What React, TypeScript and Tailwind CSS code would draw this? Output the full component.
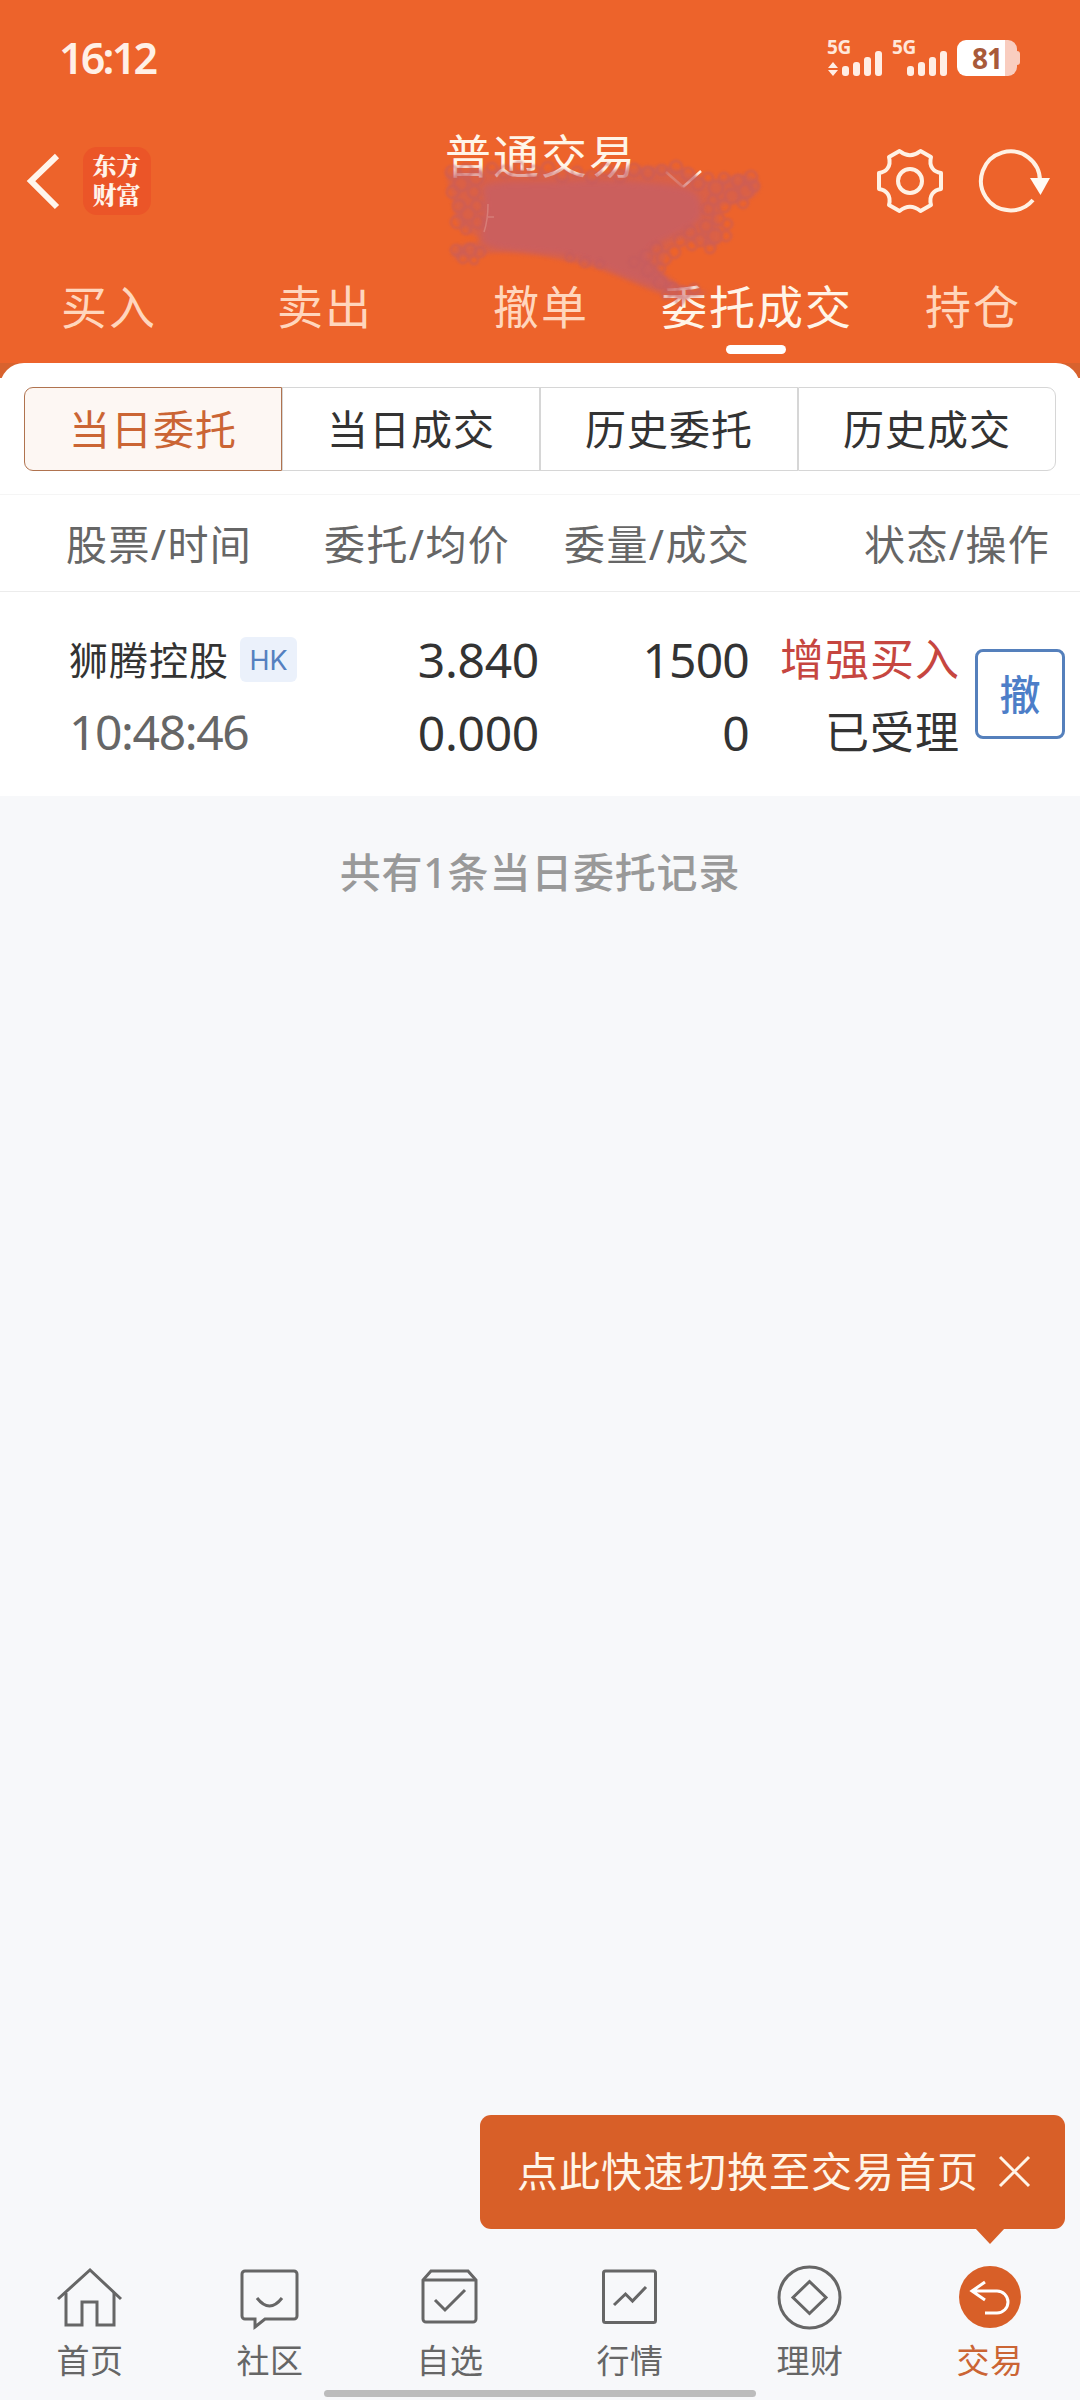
import React, { useState } from "react";
import clsx from "clsx";

const tradeTabs = ["买入", "卖出", "撤单", "委托成交", "持仓"];
const orderTabs = ["当日委托", "当日成交", "历史委托", "历史成交"];

const navItems = [
  {
    label: "首页",
    icon: (
      <>
        <path d="M3 37 35 8l31 29" />
        <path d="M11 31v32h16V40h15v23h17V31" />
      </>
    ),
  },
  {
    label: "社区",
    icon: (
      <>
        <path d="M10 9h49a3 3 0 0 1 3 3v42a3 3 0 0 1-3 3H30l-10 8V57H10a3 3 0 0 1-3-3V12a3 3 0 0 1 3-3Z" />
        <path d="M22 36q12.500 16 25 0" />
      </>
    ),
  },
  {
    label: "自选",
    icon: (
      <>
        <path d="M8 18v39a3 3 0 0 0 3 3h47a3 3 0 0 0 3-3V18l-8-9H16Z" />
        <path d="M8 18h53M20 38l10 10 20-20" />
      </>
    ),
  },
  {
    label: "行情",
    icon: (
      <>
        <rect x="8.500" y="9" width="52" height="51.500" rx="2" />
        <path d="m19 43 11.500-11 7 7L51 25" />
      </>
    ),
  },
  {
    label: "理财",
    icon: (
      <>
        <circle cx="34.500" cy="35.500" r="30.500" />
        <path d="M34.500 19.500 51 35.500l-16.500 16L18 35.500Z" />
      </>
    ),
  },
  {
    label: "交易",
    active: true,
    icon: (
      <>
        <circle cx="35" cy="35" r="31" fill="#d85f28" stroke="none" />
        <path stroke="#fff" d="M30 20 17 29l13 9M17 29h25a11 11 0 0 1 0 22H30" />
      </>
    ),
  },
];

// loose loops around the rim of the marker stroke: [x, y, radius]
const loops = [
  [452, 172, 6], [461, 184, 7], [453, 192, 6], [466, 170, 6], [476, 178, 7], [474, 192, 6],
  [459, 206, 6], [468, 214, 7], [457, 222, 6], [466, 229, 5], [477, 206, 6], [478, 222, 6],
  [456, 250, 5], [463, 258, 5], [470, 250, 6], [480, 252, 5], [474, 260, 4],
  [492, 168, 5], [505, 172, 6], [519, 167, 5], [534, 172, 6], [548, 168, 6], [562, 176, 6],
  [577, 172, 5], [592, 177, 6], [606, 170, 6], [620, 176, 6], [634, 170, 6], [648, 173, 6],
  [662, 170, 5], [676, 167, 6], [688, 174, 6], [698, 184, 6], [708, 178, 5], [716, 188, 7],
  [713, 200, 5], [724, 178, 5], [732, 196, 7], [738, 181, 6], [751, 177, 6], [746, 191, 7],
  [754, 186, 5], [743, 203, 5], [724, 206, 6], [708, 209, 6], [718, 219, 6], [727, 224, 5],
  [706, 226, 6], [715, 236, 7], [726, 236, 5], [710, 248, 5], [700, 240, 6], [690, 232, 6],
  [692, 245, 5], [680, 240, 6], [674, 252, 6], [664, 258, 7], [656, 248, 6], [660, 268, 5],
  [646, 256, 6], [634, 262, 5], [648, 270, 6], [660, 282, 6], [672, 289, 6], [683, 293, 6],
  [694, 289, 5], [680, 300, 4], [666, 295, 4], [600, 264, 4], [585, 262, 5], [570, 257, 4],
];

const MarkerStroke = () => (
  <svg
    className="pointer-events-none absolute left-[430px] top-[150px]"
    width="350"
    height="165"
    viewBox="430 150 350 165"
    fill="none"
  >
    <path
      d="M447 171C470 164 500 172 530 172S590 176 615 171 665 164 688 172 700 184 716 180 752 170 758 182 748 202 729 204 726 228 720 241 698 238 681 241 668 262 660 268 680 287 700 290 692 301 672 297 640 284 615 274 575 264 545 256 498 253 480 255 454 264 453 253 478 244 480 240 455 232 455 215 447 190 447 171Z"
      fill="#c85f62"
      opacity="0.5"
      style={{ filter: "blur(2px)" }}
    />
    <path
      d="M482 186C500 178 530 183 560 181S630 180 665 184 700 195 702 210 682 232 660 243 650 263 672 282 650 288 605 269 560 256 530 253 496 250 485 245 488 220 482 186Z"
      fill="#cb5f5f"
      opacity="0.95"
      style={{ filter: "blur(3px)" }}
    />
    <g stroke="#c45c60" strokeWidth="3" opacity="0.5" style={{ filter: "blur(1px)" }}>
      {loops.map(([x, y, r], index) => (
        <circle key={index} cx={x} cy={y} r={r} />
      ))}
    </g>
    <path d="M488 204q0 16-4 28M488 217h6" stroke="#e39b94" strokeWidth="1.500" opacity="0.5" />
  </svg>
);

const Signal: React.FC<{ data?: boolean }> = ({ data }) => (
  <div className="relative h-9 w-[55px]">
    <span className="absolute -left-px top-[-2px] font-['Open_Sans',sans-serif] text-[19px] font-bold leading-[18px] tracking-[-0.3px] text-[#ffe7da]">
      5G
    </span>
    <svg className="absolute left-0 top-0" width="55" height="36" fill="#ffeee5">
      {data && <path d="m5 22 5 6H0ZM0 30h10l-5 6Z" />}
      <rect x="14" y="26" width="7" height="10" rx="3" />
      <rect x="25" y="22" width="7" height="14" rx="3" />
      <rect x="36" y="17" width="7" height="19" rx="3" />
      <rect x="47" y="11" width="7" height="25" rx="3" />
    </svg>
  </div>
);

const App: React.FC = () => {
  const [activeTrade, setActiveTrade] = useState("委托成交");
  const [activeOrder, setActiveOrder] = useState("当日委托");

  return (
    <div className="flex h-[2400px] w-[1080px] flex-col overflow-hidden bg-[#f7f8fa] font-['Noto_Sans','Noto_Sans_CJK_SC',sans-serif] text-[#333]">
      <header className="relative h-[363px] shrink-0 bg-[#ed632b]">
        {/* status bar */}
        <div className="flex h-[116px] items-center justify-between pl-[59px] pr-[60px]">
          <span className="pb-px text-[43px] font-semibold leading-none tracking-[-2.8px] text-[#fff0e6]">16:12</span>
          <div className="flex items-center">
            <Signal data />
            <div className="w-[10px]" />
            <Signal />
            <div className="ml-[9px] flex h-9 w-[60px] items-center justify-center rounded-[9px] bg-[linear-gradient(to_right,#fff_80%,#f9cdbf_80%)] font-['Open_Sans',sans-serif] text-[28px] font-bold leading-none tracking-[-1px] text-[#a85a3a]">
              81
            </div>
            <div className="h-[14px] w-[3px] rounded-r-sm bg-[#f9cdbf]" />
          </div>
        </div>

        {/* title bar */}
        <div className="flex h-[130px] items-center">
          <svg className="ml-[26px]" width="36" height="60" fill="none" stroke="#fff5ec" strokeWidth="6">
            <path d="M31 5 5 30l26 26" />
          </svg>
          <div className="ml-[21px] flex size-[68px] items-center justify-center rounded-[14px] bg-[#eb5528] pb-[4px] pr-px font-['Noto_Serif_CJK_SC','Noto_Sans_CJK_SC',sans-serif] text-[24px] font-black leading-[29px] text-[#fff3ea]">
            <span className="w-[48px] break-all">东方财富</span>
          </div>
          <div className="ml-[294px] flex h-full w-[280px] items-start pt-[16px] text-[46px] leading-[46px] tracking-[2px] text-[#fff5e8]">
            <span className="whitespace-nowrap">普通交易</span>
            <svg className="ml-[27px] mt-[38px] shrink-0" width="40" height="20" fill="none" strokeWidth="2.500">
              <path d="m2 2 17 15" stroke="#f0a080" />
              <path d="M19 17 37 1" stroke="#fff0e0" />
            </svg>
          </div>
          <svg className="ml-[149px]" width="72" height="72" viewBox="-36 -36 72 72" fill="none" stroke="#fff1e4" strokeWidth="4" strokeLinejoin="round">
            <path d="M-10.500-30Q0-21.500 10.500-30L21-24C18.500-14 24-9 31-8V8C24 9 18.500 14 21 24L10.500 30Q0 21.500-10.500 30L-21 24C-18.500 14-24 9-31 8V-8C-24-9-18.500-14-21-24Z" />
            <circle r="12" />
          </svg>
          <svg className="ml-[24px]" width="80" height="72" viewBox="-40 -36 80 72" fill="none" stroke="#fff1e4" strokeWidth="4">
            <path d="M30 0A29.500 29.500 0 1 0 23 19" />
            <path d="M20-3h20L30.500 14Z" fill="#fffaf4" stroke="none" />
          </svg>
        </div>

        <nav className="grid h-[117px] grid-cols-5">
          {tradeTabs.map((tab) => (
            <button
              key={tab}
              onClick={() => setActiveTrade(tab)}
              className={clsx(
                "flex flex-col items-center pt-[35px] text-[46px] leading-[50px] tracking-[2px]",
                activeTrade === tab ? "text-[#fff5e8]" : "text-[#ffd6bd]"
              )}
            >
              <span className="whitespace-nowrap pl-[2px]">{tab}</span>
              {activeTrade === tab && <i className="mt-[14px] h-[9px] w-[60px] rounded-full bg-white" />}
            </button>
          ))}
        </nav>
        <MarkerStroke />
      </header>

      <main className="shrink-0 bg-[linear-gradient(#d8622e_15px,#fff_15px)]">
        <div className="rounded-t-[24px] bg-white pt-6">
          <div className="mx-6 grid h-[84px] grid-cols-4">
            {orderTabs.map((tab) => (
              <button
                key={tab}
                onClick={() => setActiveOrder(tab)}
                className={clsx(
                  "border text-[41px] leading-[60px] tracking-[1px] first:rounded-l-[9px] last:rounded-r-[9px]",
                  activeOrder === tab
                    ? "border-[#b0734f] bg-[#fdf7f3] text-[#cb6534]"
                    : "border-[#d6d6d6]"
                )}
              >
                {tab}
              </button>
            ))}
          </div>

          <div className="mt-[23px] flex h-[98px] items-center border-y border-t-[#f5f5f5] border-b-[#ececec] pt-[2px] text-[41px] leading-none tracking-[1.400px] text-[#666]">
            <span className="ml-[66px] w-[258px]">股票/时间</span>
            <span className="w-[240px]">委托/均价</span>
            <span className="w-[300px]">委量/成交</span>
            <span>状态/操作</span>
          </div>

          <div className="flex h-[204px] items-center pt-[3px]">
            <div className="ml-[69px] w-[259px]">
              <div className="flex h-[73px] items-center">
                <span className="whitespace-nowrap text-[39px] leading-none tracking-[1px]">狮腾控股</span>
                <span className="ml-[11px] mt-px flex h-[45px] w-[57px] items-center justify-center rounded-md bg-[#ebf1fb] pt-px font-['Inter',sans-serif] text-[27px] leading-none text-[#5580c0]">
                  HK
                </span>
              </div>
              <div className="flex h-[73px] items-center text-[48px] leading-none tracking-[-1.400px] text-[#666]">10:48:46</div>
            </div>
            <div className="w-[211px] text-right text-[48px] leading-[73px] tracking-[-0.300px]">
              <div>3.840</div>
              <div>0.000</div>
            </div>
            <div className="w-[210px] text-right text-[48px] leading-[73px] tracking-[-0.800px]">
              <div>1500</div>
              <div>0</div>
            </div>
            <div className="w-[211px] text-right text-[44px] leading-[73px] tracking-[1px]">
              <div className="text-[#c64640]">增强买入</div>
              <div>已受理</div>
            </div>
            <button className="-mt-[3px] ml-[15px] size-[90px] rounded-lg border-3 border-[#5580bc] pt-px text-[41px] font-medium leading-none text-[#4d7ec8]">
              撤
            </button>
          </div>
        </div>
      </main>

      <p className="mt-[52px] text-center text-[41px] font-medium leading-[48px] tracking-[0.800px] text-[#999]">
        共有1条当日委托记录
      </p>

      <div className="relative mb-[29px] ml-[480px] mt-auto flex h-[114px] w-[585px] items-center rounded-[11px] bg-[#d85f28] pb-px pl-[37px] text-[41px] leading-none tracking-[1px] text-[#fff5e8]">
        点此快速切换至交易首页
        <svg className="ml-[19px] mt-px" width="34" height="34" fill="none" stroke="currentColor" strokeWidth="3">
          <path d="m2 2 29 29M31 2 2 31" />
        </svg>
        <svg className="absolute left-[495px] top-[113px]" width="30" height="17" fill="#d85f28">
          <path d="M0 0h30L15 16Z" />
        </svg>
      </div>

      <footer className="flex h-[142px] shrink-0 flex-col">
        <div className="grid h-[132px] grid-cols-6">
          {navItems.map((item) => (
            <div
              key={item.label}
              className={clsx(
                "flex flex-col items-center pt-[4px] text-[33px] leading-[34px] tracking-[0.5px]",
                item.active ? "text-[#cb6534]" : "text-[#666]"
              )}
            >
              <svg width="70" height="70" fill="none" stroke={item.active ? "#fff" : "#666"} strokeWidth="3">
                {item.icon}
              </svg>
              <span className="mt-[12px]">{item.label}</span>
            </div>
          ))}
        </div>
        <div className="mx-auto h-[7px] w-[432px] rounded-full bg-[#bcbcbc]" />
      </footer>
    </div>
  );
};

export default App;
